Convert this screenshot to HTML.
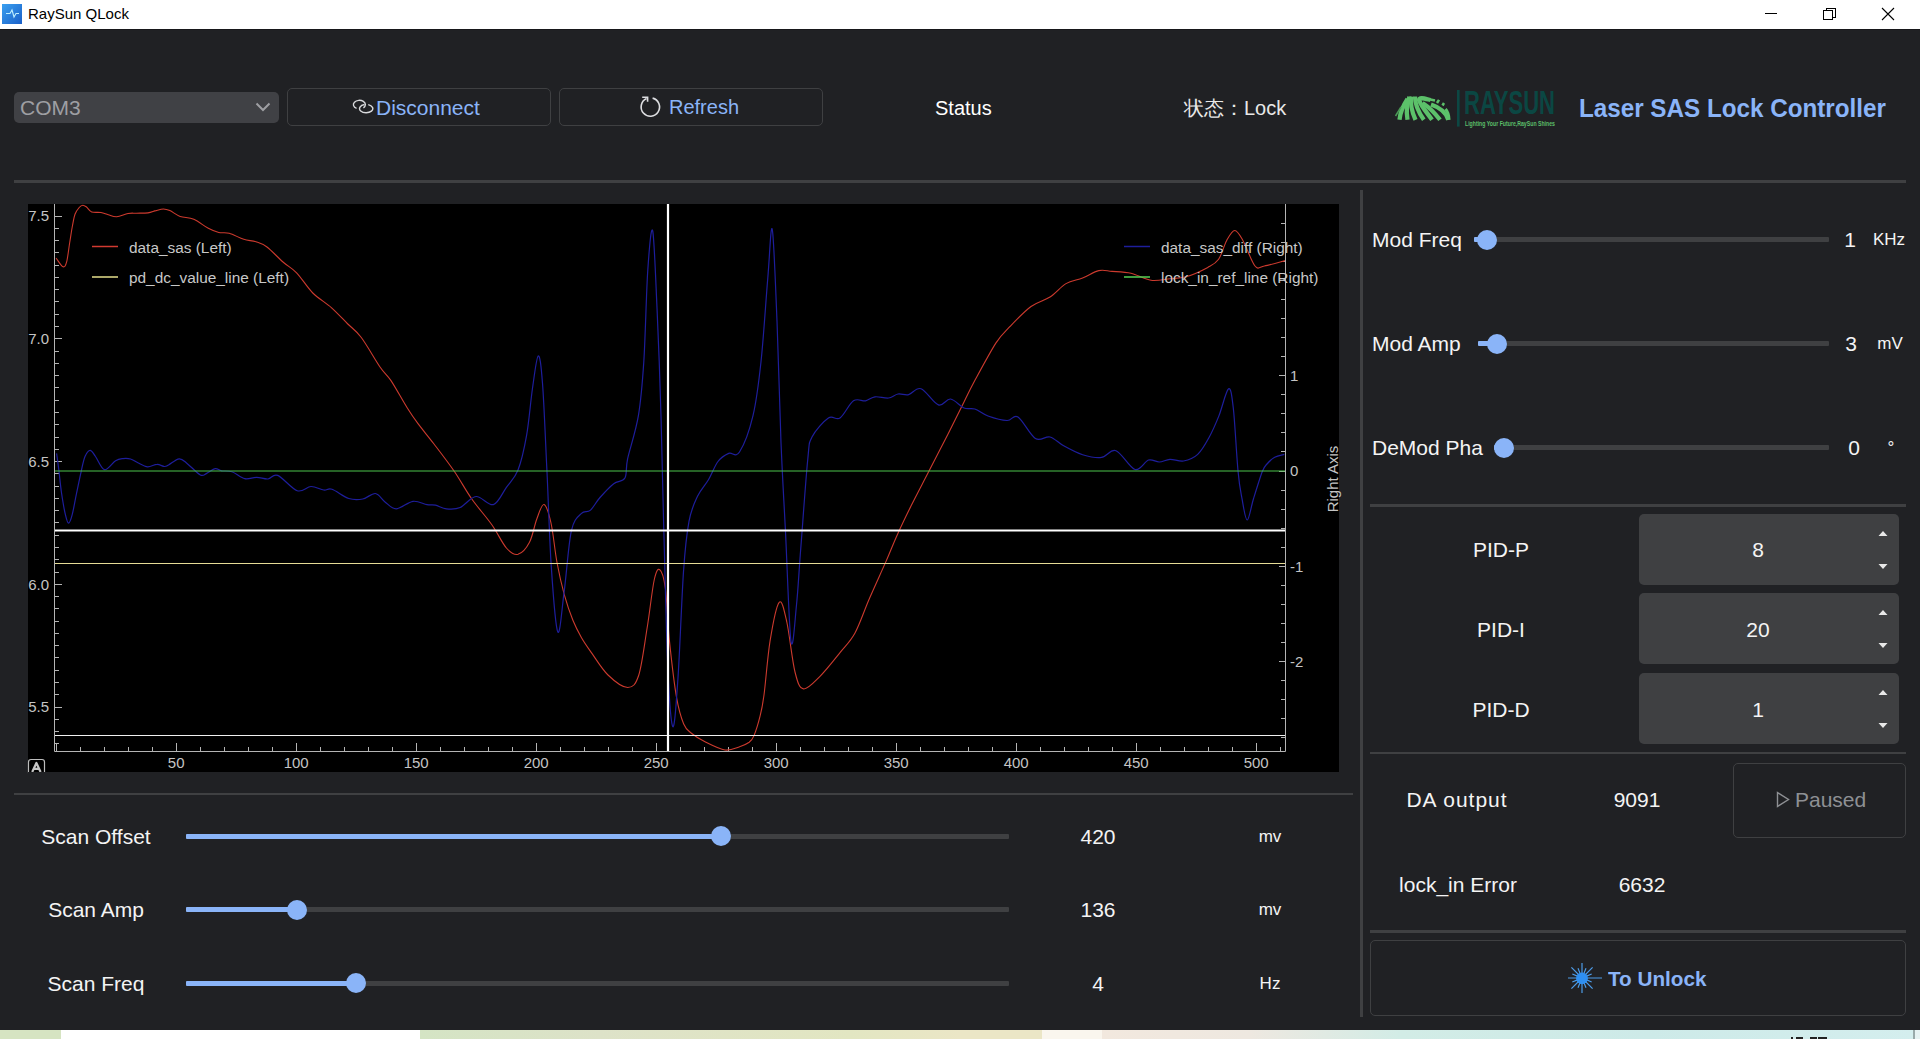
<!DOCTYPE html>
<html><head><meta charset="utf-8">
<style>
*{margin:0;padding:0;box-sizing:border-box}
html,body{width:1920px;height:1039px;overflow:hidden;background:#202124;font-family:"Liberation Sans",sans-serif;color:#e4e7eb}
.a{position:absolute}
.t{position:absolute;white-space:nowrap;line-height:1}
.c{transform:translateX(-50%)}
.btn{position:absolute;border:1px solid #3f4042;border-radius:5px}
.hl{position:absolute;background:#3f4042}
.groove{position:absolute;height:5px;background:#3f4042;border-radius:1px}
.fill{position:absolute;height:5px;background:#8ab4f8;border-radius:1px}
.knob{position:absolute;width:20px;height:20px;border-radius:50%;background:#8ab4f8}
.spin{position:absolute;background:#3f4042;border-radius:5px}
.ax{font-family:"Liberation Sans",sans-serif;font-size:15px;fill:#c4c4c4}
.lg{font-family:"Liberation Sans",sans-serif;font-size:15.4px;fill:#c8c8c8}
.lbl{font-size:21px;color:#f4f4f4}
</style></head><body>
<div class="a" style="left:0;top:0;width:1920px;height:29px;background:#fff">
  <svg class="a" style="left:2px;top:4px" width="20" height="20" viewBox="0 0 20 20">
    <defs><linearGradient id="ig" x1="0" y1="0" x2="1" y2="1"><stop offset="0" stop-color="#3aa0f0"/><stop offset="1" stop-color="#1a5fc8"/></linearGradient></defs>
    <rect x="0" y="0" width="20" height="20" fill="url(#ig)"/>
    <polyline points="4,9.5 8,9.5 10,6 12,13 14,9.5 17,9.5" fill="none" stroke="#bfefff" stroke-width="1.1"/>
  </svg>
  <div class="t" style="left:28px;top:6px;font-size:15px;color:#000">RaySun QLock</div>
  <div class="a" style="left:1765px;top:13px;width:12px;height:1px;background:#000"></div>
  <div class="a" style="left:1826px;top:8px;width:9.5px;height:10px;border:1px solid #000"></div>
  <div class="a" style="left:1823px;top:10px;width:10px;height:10px;border:1px solid #000;background:#fff"></div>
  <svg class="a" style="left:1881px;top:7px" width="14" height="14" viewBox="0 0 14 14"><path d="M1,1 L13,13 M13,1 L1,13" stroke="#000" stroke-width="1.1"/></svg>
</div>

<div class="a" style="left:0;top:29px;width:1920px;height:1px;background:#17171a"></div>
<div class="a" style="left:14px;top:92px;width:265px;height:31px;background:#404145;border-radius:5px"></div>
<div class="t" style="left:20px;top:97px;font-size:21px;color:#9e9fa3">COM3</div>
<svg class="a" style="left:255px;top:102px" width="16" height="10" viewBox="0 0 16 10"><polyline points="1.5,1.5 8,8 14.5,1.5" fill="none" stroke="#9e9fa3" stroke-width="2"/></svg>

<div class="btn" style="left:287px;top:88px;width:264px;height:38px"></div>
<svg class="a" style="left:352px;top:99px" width="22" height="15" viewBox="0 0 22 15">
  <path d="M4.58,9.40 A6.0,4.3 0 1 1 11.41,8.80" fill="none" stroke="#d8d9dc" stroke-width="1.4"/>
  <path d="M16.24,5.61 A6.6,4.2 0 1 1 12.49,5.54" fill="none" stroke="#d8d9dc" stroke-width="1.4"/>
</svg>
<div class="t" style="left:376px;top:97px;font-size:21px;color:#8ab4f8">Disconnect</div>

<div class="btn" style="left:559px;top:88px;width:264px;height:38px"></div>
<svg class="a" style="left:638px;top:96px" width="24" height="22" viewBox="0 0 24 22">
  <path d="M14.6,2.1 A9.2,9.2 0 1 1 8.6,2.6" fill="none" stroke="#dcdde0" stroke-width="1.6"/>
  <path d="M4.2,1.3 L9.6,1.3 L9.6,5.8" fill="none" stroke="#dcdde0" stroke-width="1.6"/>
</svg>
<div class="t" style="left:669px;top:97px;font-size:20px;color:#8ab4f8">Refresh</div>

<div class="t" style="left:935px;top:98px;font-size:20px;color:#fff">Status</div>
<div class="t" style="left:1184px;top:98px;font-size:20px;color:#e8e8e8">状态：Lock</div>

<div class="t" style="left:1579px;top:95.5px;font-size:25.5px;font-weight:bold;color:#8ab4f8;transform:scaleX(0.95);transform-origin:0 0">Laser SAS Lock Controller</div>

<div class="hl" style="left:14px;top:180px;width:1892px;height:3px"></div>
<svg class="a" style="left:1390px;top:90px" width="170" height="40" viewBox="0 0 170 40">
 <g fill="none" stroke="#5cc16a" stroke-width="4.3" stroke-linecap="butt">
  <path d="M9.5,29.8 C10,24 11.5,18 17.5,9"/>
  <path d="M17.5,29.8 C16.5,23 15.5,15 19.5,7"/>
  <path d="M25.5,29.8 C22.5,23 19.8,14 21.5,6.5"/>
  <path d="M33.8,29.8 C29,23 25,15 25,6.5"/>
  <path d="M42,29.8 C36.5,22 31,16 29,10 C29.5,7 34,8.5 40.5,10"/>
  <path d="M50,29.8 C44,22 38,16.5 32.5,13"/>
  <path d="M58.3,29.8 C56,22 50,17.5 41,14.5"/>
  <path d="M59,29.8 C59,25 58,22 55.5,19" stroke-width="3"/>
  <path d="M38,9 L45,10.5 M47,13 L49,9.8 M52.5,15.5 L54,13" stroke-width="2.5"/>
 </g>
 <path d="M5.5,26 L11,17" stroke="#4a9a56" stroke-width="1.5"/>
 <rect x="67" y="-1" width="2.6" height="37.6" fill="#0c4844"/>
 <text x="74" y="24" style="font:bold 34px 'Liberation Sans',sans-serif" fill="#0b4743" textLength="91" lengthAdjust="spacingAndGlyphs">RAYSUN</text>
 <text x="75" y="36" style="font:bold 7.5px 'Liberation Sans',sans-serif" fill="#5cbf6a" textLength="90" lengthAdjust="spacingAndGlyphs">Lighting Your Future,RaySun Shines</text>
</svg>
<svg class="a" style="left:0;top:0" width="1920" height="1039" viewBox="0 0 1920 1039">
<rect x="28" y="204" width="1311" height="568" fill="#000"/>
<path d="M54.5,204 V751.5 H1285.5 V204" fill="none" stroke="#b4b4b4" stroke-width="1"/>
<path d="M55,743.8h4 M55,731.6h4 M55,719.3h4 M55,707.0h7 M55,694.7h4 M55,682.5h4 M55,670.2h4 M55,657.9h4 M55,645.6h4 M55,633.4h4 M55,621.1h4 M55,608.8h4 M55,596.5h4 M55,584.2h7 M55,572.0h4 M55,559.7h4 M55,547.4h4 M55,535.2h4 M55,522.9h4 M55,510.6h4 M55,498.3h4 M55,486.1h4 M55,473.8h4 M55,461.5h7 M55,449.2h4 M55,437.0h4 M55,424.7h4 M55,412.4h4 M55,400.1h4 M55,387.9h4 M55,375.6h4 M55,363.3h4 M55,351.0h4 M55,338.8h7 M55,326.5h4 M55,314.2h4 M55,301.9h4 M55,289.7h4 M55,277.4h4 M55,265.1h4 M55,252.8h4 M55,240.5h4 M55,228.3h4 M55,216.0h7 M56.2,751v-8 M80.2,751v-4 M104.2,751v-4 M128.2,751v-4 M152.2,751v-4 M176.2,751v-8 M200.2,751v-4 M224.2,751v-4 M248.2,751v-4 M272.2,751v-4 M296.2,751v-8 M320.2,751v-4 M344.2,751v-4 M368.2,751v-4 M392.2,751v-4 M416.2,751v-8 M440.2,751v-4 M464.2,751v-4 M488.2,751v-4 M512.2,751v-4 M536.2,751v-8 M560.2,751v-4 M584.2,751v-4 M608.2,751v-4 M632.2,751v-4 M656.2,751v-8 M680.2,751v-4 M704.2,751v-4 M728.2,751v-4 M752.2,751v-4 M776.2,751v-8 M800.2,751v-4 M824.2,751v-4 M848.2,751v-4 M872.2,751v-4 M896.2,751v-8 M920.2,751v-4 M944.2,751v-4 M968.2,751v-4 M992.2,751v-4 M1016.2,751v-8 M1040.2,751v-4 M1064.2,751v-4 M1088.2,751v-4 M1112.2,751v-4 M1136.2,751v-8 M1160.2,751v-4 M1184.2,751v-4 M1208.2,751v-4 M1232.2,751v-4 M1256.2,751v-8 M1280.2,751v-4 M1285,737.8h-4 M1285,718.8h-4 M1285,699.7h-4 M1285,680.7h-4 M1285,661.6h-6 M1285,642.5h-4 M1285,623.5h-4 M1285,604.4h-4 M1285,585.4h-4 M1285,566.3h-6 M1285,547.2h-4 M1285,528.2h-4 M1285,509.1h-4 M1285,490.1h-4 M1285,471.0h-6 M1285,451.9h-4 M1285,432.9h-4 M1285,413.8h-4 M1285,394.8h-4 M1285,375.7h-6 M1285,356.6h-4 M1285,337.6h-4 M1285,318.5h-4 M1285,299.5h-4 M1285,280.4h-6 M1285,261.3h-4 M1285,242.3h-4 M1285,223.2h-4" fill="none" stroke="#b4b4b4" stroke-width="1" shape-rendering="crispEdges"/>
<text x="49" y="221.3" text-anchor="end" class="ax">7.5</text>
<text x="49" y="344.1" text-anchor="end" class="ax">7.0</text>
<text x="49" y="466.8" text-anchor="end" class="ax">6.5</text>
<text x="49" y="589.5" text-anchor="end" class="ax">6.0</text>
<text x="49" y="712.3" text-anchor="end" class="ax">5.5</text>
<text x="176.2" y="767.5" text-anchor="middle" class="ax">50</text>
<text x="296.2" y="767.5" text-anchor="middle" class="ax">100</text>
<text x="416.2" y="767.5" text-anchor="middle" class="ax">150</text>
<text x="536.2" y="767.5" text-anchor="middle" class="ax">200</text>
<text x="656.2" y="767.5" text-anchor="middle" class="ax">250</text>
<text x="776.2" y="767.5" text-anchor="middle" class="ax">300</text>
<text x="896.2" y="767.5" text-anchor="middle" class="ax">350</text>
<text x="1016.2" y="767.5" text-anchor="middle" class="ax">400</text>
<text x="1136.2" y="767.5" text-anchor="middle" class="ax">450</text>
<text x="1256.2" y="767.5" text-anchor="middle" class="ax">500</text>
<text x="1290" y="381.0" class="ax">1</text>
<text x="1290" y="476.3" class="ax">0</text>
<text x="1290" y="571.6" class="ax">-1</text>
<text x="1290" y="666.9" class="ax">-2</text>
<text x="1338" y="479" transform="rotate(-90 1338 479)" text-anchor="middle" class="ax">Right Axis</text>
<path d="M56.0,258.0 C57.2,259.4 61.2,266.1 63.0,266.7 C64.8,267.3 65.6,265.8 66.7,261.7 C67.8,257.6 68.8,247.9 69.8,242.0 C70.8,236.1 71.5,230.6 72.4,226.0 C73.3,221.4 73.9,217.4 75.0,214.3 C76.1,211.2 77.9,209.0 79.2,207.5 C80.5,206.0 81.6,205.3 82.8,205.2 C84.0,205.1 85.0,205.9 86.5,207.0 C88.0,208.1 89.3,211.0 91.7,211.9 C94.1,212.8 98.2,212.0 101.0,212.5 C103.8,213.0 105.7,214.1 108.3,214.8 C110.9,215.5 113.4,216.9 116.7,216.7 C120.0,216.5 124.7,214.1 128.0,213.5 C131.3,212.9 133.2,213.3 136.5,213.2 C139.8,213.1 144.8,213.3 148.0,212.9 C151.2,212.5 153.4,211.2 156.0,210.6 C158.6,209.9 161.2,209.0 163.5,209.0 C165.8,209.0 167.0,209.4 169.8,210.6 C172.6,211.8 176.2,215.0 180.2,216.4 C184.2,217.8 189.1,217.2 193.8,219.2 C198.4,221.2 204.1,226.1 208.3,228.3 C212.5,230.5 215.3,231.7 218.8,232.5 C222.2,233.3 225.0,232.2 229.2,233.3 C233.4,234.4 239.3,237.9 243.8,239.3 C248.2,240.7 252.1,240.5 256.0,241.8 C259.9,243.1 262.5,243.6 267.0,247.0 C271.5,250.4 278.1,257.7 283.0,262.0 C287.9,266.3 291.6,267.6 296.6,272.8 C301.6,278.0 307.0,287.2 312.8,293.0 C318.6,298.8 325.8,302.6 331.6,307.8 C337.4,313.0 342.9,319.1 347.8,324.0 C352.8,328.9 355.9,330.3 361.3,337.5 C366.7,344.7 375.1,359.8 380.0,367.0 C384.9,374.2 386.5,373.9 391.0,380.6 C395.5,387.4 402.5,400.3 407.0,407.5 C411.5,414.7 413.5,417.6 418.0,423.7 C422.5,429.8 427.9,436.0 434.0,444.0 C440.1,452.0 448.1,462.3 454.4,471.5 C460.7,480.7 465.5,490.1 471.8,499.0 C478.1,507.9 486.2,516.8 492.0,525.0 C497.8,533.2 502.1,543.1 506.4,548.0 C510.7,552.9 514.1,555.2 518.0,554.3 C521.9,553.3 526.4,548.2 529.5,542.3 C532.6,536.4 534.4,525.3 536.8,519.0 C539.2,512.7 541.6,503.8 544.0,504.5 C546.4,505.2 548.8,513.3 551.0,523.0 C553.2,532.7 554.8,550.6 557.0,562.5 C559.2,574.4 561.6,584.7 564.2,594.3 C566.9,603.9 570.0,613.1 572.9,620.3 C575.8,627.5 578.4,632.3 581.5,637.7 C584.6,643.1 587.0,646.4 591.4,652.6 C595.8,658.8 602.0,669.2 608.0,675.0 C614.0,680.8 622.6,687.5 627.7,687.5 C632.8,687.5 635.5,685.0 638.8,675.0 C642.0,665.0 644.6,643.3 647.2,627.5 C649.8,611.7 652.1,589.6 654.2,580.0 C656.3,570.4 657.9,568.3 659.8,569.7 C661.7,571.1 663.8,576.5 665.4,588.4 C667.0,600.3 667.6,623.3 669.5,641.4 C671.4,659.5 674.1,683.4 676.5,697.2 C678.9,711.0 681.2,718.0 683.7,724.0 C686.2,730.0 687.7,730.2 691.4,733.2 C695.1,736.2 700.3,739.5 705.9,742.3 C711.5,745.1 719.4,749.3 725.0,750.0 C730.6,750.7 735.6,748.0 739.6,746.7 C743.6,745.4 746.8,744.1 749.2,742.3 C751.6,740.4 752.2,739.9 754.0,735.6 C755.8,731.3 758.3,723.2 760.0,716.4 C761.7,709.6 762.3,707.5 764.0,695.0 C765.7,682.5 767.5,656.9 770.0,641.4 C772.5,625.9 776.4,605.5 779.2,602.3 C782.0,599.1 784.2,610.4 786.8,622.0 C789.4,633.6 792.2,660.9 795.0,672.0 C797.8,683.1 799.3,688.2 803.5,688.9 C807.7,689.6 813.9,682.3 820.0,676.3 C826.1,670.2 834.2,659.8 840.0,652.6 C845.8,645.4 850.2,641.9 855.0,633.0 C859.8,624.1 863.9,611.4 869.0,599.5 C874.1,587.6 881.1,572.6 885.8,561.9 C890.5,551.2 892.8,544.7 897.0,535.4 C901.2,526.1 905.7,516.7 911.0,506.0 C916.3,495.3 922.9,482.9 929.0,471.0 C935.1,459.1 942.0,446.0 947.8,434.5 C953.6,423.0 959.5,411.0 964.0,402.0 C968.5,393.0 969.5,390.5 974.8,380.6 C980.1,370.8 990.2,351.9 996.0,342.9 C1001.8,333.9 1004.0,332.8 1009.8,326.7 C1015.6,320.6 1024.3,311.4 1031.0,306.5 C1037.7,301.6 1044.2,300.8 1050.0,297.0 C1055.8,293.2 1060.6,286.8 1066.0,283.6 C1071.4,280.4 1077.1,280.2 1082.6,278.0 C1088.1,275.8 1093.9,271.7 1098.8,270.6 C1103.7,269.5 1106.6,270.9 1112.0,271.4 C1117.4,271.8 1124.5,271.8 1131.0,273.3 C1137.5,274.8 1144.5,279.4 1151.0,280.3 C1157.5,281.2 1164.2,279.3 1170.0,278.7 C1175.8,278.1 1179.7,278.7 1186.0,276.8 C1192.3,274.9 1202.4,270.3 1207.8,267.4 C1213.2,264.5 1215.4,263.8 1218.6,259.3 C1221.8,254.8 1224.0,245.2 1226.7,240.4 C1229.4,235.6 1232.1,230.5 1234.8,230.5 C1237.5,230.5 1239.5,234.5 1242.9,240.4 C1246.3,246.3 1251.4,261.7 1255.0,266.0 C1258.6,270.3 1259.4,266.9 1264.4,266.0 C1269.4,265.1 1281.6,261.5 1285.0,260.6" fill="none" stroke="#cc3a2e" stroke-width="1.1"/>
<path d="M56.6,453.3 C57.0,456.3 58.2,464.6 59.0,471.3 C59.8,478.0 60.5,486.3 61.6,493.5 C62.7,500.7 64.2,509.8 65.4,514.7 C66.6,519.7 67.4,523.2 68.5,523.2 C69.6,523.2 70.9,519.7 72.2,514.7 C73.5,509.8 75.0,500.7 76.5,493.5 C78.0,486.3 79.8,477.5 81.2,471.3 C82.6,465.1 83.5,460.0 85.0,456.5 C86.5,453.0 88.5,450.3 90.2,450.3 C92.0,450.3 93.1,453.3 95.5,456.5 C97.9,459.7 101.2,469.0 104.5,469.7 C107.8,470.4 112.5,462.5 115.6,460.7 C118.7,458.9 120.5,458.9 123.0,458.6 C125.5,458.3 128.0,458.3 130.5,459.0 C133.0,459.7 135.1,461.5 137.9,462.8 C140.7,464.1 144.2,466.5 147.4,466.8 C150.6,467.1 154.2,464.4 157.0,464.4 C159.8,464.3 162.4,466.4 164.3,466.5 C166.2,466.6 166.1,466.3 168.6,465.0 C171.1,463.7 176.0,459.0 179.2,458.8 C182.4,458.6 184.1,461.2 187.6,463.9 C191.1,466.6 197.1,473.4 200.3,475.0 C203.5,476.6 204.2,474.5 206.7,473.4 C209.2,472.3 212.7,469.0 215.2,468.6 C217.7,468.2 218.7,470.3 221.5,470.8 C224.3,471.3 228.1,470.5 232.0,471.8 C235.9,473.1 240.7,477.8 244.8,478.7 C248.9,479.6 252.8,477.2 256.7,477.3 C260.6,477.4 264.5,479.3 268.0,479.0 C271.5,478.7 272.8,473.4 277.7,475.4 C282.6,477.3 291.6,488.8 297.2,490.7 C302.8,492.6 306.6,486.6 311.0,486.5 C315.4,486.4 320.2,489.5 323.7,490.0 C327.2,490.5 327.8,487.9 332.0,489.3 C336.2,490.7 343.7,496.9 348.8,498.5 C353.9,500.1 358.4,499.8 362.8,499.0 C367.2,498.2 371.7,493.0 375.4,493.5 C379.1,494.0 381.5,499.3 385.0,501.9 C388.5,504.4 391.6,508.9 396.3,508.8 C401.0,508.7 407.9,502.0 413.0,501.3 C418.1,500.6 423.3,504.1 427.0,504.7 C430.7,505.3 432.1,504.5 435.4,505.2 C438.6,505.9 442.4,508.4 446.5,508.8 C450.6,509.2 455.3,509.6 460.2,507.5 C465.1,505.4 470.5,497.0 476.0,496.5 C481.5,496.0 488.3,506.1 493.4,504.6 C498.5,503.1 502.3,493.1 506.4,487.3 C510.5,481.5 514.6,478.7 518.0,470.0 C521.4,461.3 524.2,448.8 526.6,435.3 C529.0,421.8 530.5,402.2 532.4,389.0 C534.3,375.8 536.5,356.9 538.2,356.0 C539.9,355.1 541.0,364.3 542.5,383.3 C544.0,402.3 545.4,439.6 546.9,470.0 C548.4,500.4 549.4,538.4 551.2,565.4 C553.0,592.4 555.6,627.7 557.8,632.0 C560.0,636.3 561.9,608.2 564.2,591.3 C566.5,574.4 568.5,543.7 571.4,530.7 C574.3,517.7 578.4,516.7 581.5,513.3 C584.6,509.9 587.1,513.0 590.2,510.4 C593.3,507.8 596.1,501.9 600.0,497.5 C603.9,493.1 609.6,486.9 613.7,483.7 C617.9,480.4 622.6,482.1 624.9,478.0 C627.2,473.9 625.4,469.2 627.6,458.8 C629.9,448.4 635.7,431.8 638.4,415.6 C641.1,399.4 642.2,386.0 643.8,361.7 C645.4,337.4 646.3,291.8 647.8,270.0 C649.3,248.2 651.2,224.7 652.7,231.0 C654.2,237.3 655.6,277.0 657.0,307.8 C658.4,338.6 659.4,360.0 661.0,415.6 C662.6,471.2 664.9,589.7 666.8,641.4 C668.7,693.1 670.6,720.0 672.5,726.0 C674.4,732.0 676.2,703.4 678.0,677.7 C679.8,652.0 681.7,597.7 683.5,571.6 C685.3,545.5 686.7,533.9 689.0,521.4 C691.3,508.8 694.2,503.3 697.5,496.3 C700.8,489.3 705.2,485.3 708.6,479.5 C712.0,473.7 714.6,465.9 718.0,461.5 C721.4,457.1 725.1,455.0 728.7,453.4 C732.3,451.8 735.5,458.3 739.5,452.0 C743.5,445.7 749.4,430.7 753.0,415.6 C756.6,400.6 758.5,384.6 761.0,361.7 C763.5,338.8 765.9,300.0 767.8,278.0 C769.7,256.0 770.8,222.4 772.3,229.6 C773.8,236.8 775.5,285.5 777.0,321.0 C778.5,356.5 779.6,407.8 781.0,442.6 C782.4,477.4 783.7,496.7 785.4,529.8 C787.1,562.9 789.1,628.9 791.0,641.4 C792.9,653.9 794.9,620.4 796.5,605.0 C798.1,589.6 798.8,573.5 800.7,549.3 C802.6,525.1 805.8,478.7 807.7,460.0 C809.6,441.3 808.5,444.0 812.0,437.0 C815.5,430.0 823.7,421.2 828.4,418.0 C833.1,414.8 835.8,420.9 840.0,418.0 C844.2,415.1 849.2,403.7 853.5,400.8 C857.8,397.9 862.0,401.5 865.6,400.8 C869.2,400.1 871.2,397.3 875.0,396.8 C878.8,396.3 884.7,398.5 888.5,398.0 C892.3,397.5 894.6,394.6 898.0,394.0 C901.4,393.4 904.9,395.5 908.7,394.6 C912.5,393.7 916.0,387.0 921.0,388.7 C926.0,390.4 933.5,403.2 938.4,404.9 C943.3,406.6 946.2,398.5 950.5,399.0 C954.8,399.5 960.0,406.3 964.0,408.0 C968.0,409.7 970.8,407.7 974.8,409.0 C978.8,410.3 982.6,414.1 988.0,416.0 C993.4,417.9 1002.0,420.3 1007.0,420.5 C1012.0,420.7 1013.3,414.0 1018.0,417.0 C1022.7,420.0 1030.1,435.2 1035.4,438.5 C1040.7,441.8 1045.3,435.8 1050.0,437.0 C1054.7,438.2 1058.3,442.9 1063.7,445.8 C1069.1,448.8 1076.3,452.8 1082.6,454.7 C1088.9,456.6 1095.9,458.1 1101.5,457.4 C1107.1,456.7 1110.4,448.7 1116.0,450.7 C1121.6,452.7 1129.6,467.9 1135.0,469.5 C1140.4,471.1 1144.5,461.2 1148.5,460.0 C1152.5,458.8 1155.7,462.1 1159.3,462.0 C1162.9,461.9 1166.0,459.5 1170.0,459.3 C1174.0,459.1 1179.0,461.8 1183.6,461.0 C1188.2,460.2 1193.4,458.4 1197.7,454.4 C1202.0,450.4 1205.8,443.4 1209.3,437.0 C1212.8,430.6 1215.7,423.9 1218.9,415.9 C1222.1,407.9 1226.1,390.2 1228.5,388.9 C1230.9,387.6 1231.7,394.2 1233.3,408.0 C1234.9,421.8 1236.6,456.6 1238.1,471.7 C1239.5,486.8 1240.5,490.6 1242.0,498.7 C1243.5,506.8 1245.3,520.0 1247.2,520.0 C1249.1,520.0 1251.0,506.8 1253.5,498.7 C1256.0,490.6 1260.0,477.5 1262.2,471.7 C1264.5,465.9 1264.9,466.4 1267.0,464.0 C1269.1,461.6 1271.8,458.9 1274.7,457.3 C1277.6,455.7 1282.7,454.9 1284.3,454.4" fill="none" stroke="#1e1e9c" stroke-width="1.2"/>
<path d="M55,471h1230" stroke="#4cc44c" stroke-width="1.2"/>
<path d="M55,530.5h1230" stroke="#fff" stroke-width="2.2"/>
<path d="M55,563.5h1230" stroke="#e6dc96" stroke-width="1.1"/>
<path d="M55,735.5h1230" stroke="#f0f0f0" stroke-width="1.2"/>
<path d="M668,204V751" stroke="#fff" stroke-width="2.2"/>
<path d="M92,246.5h26" stroke="#d23a30" stroke-width="1.5"/>
<path d="M92,277h26" stroke="#e6e08c" stroke-width="1.5"/>
<text x="129" y="252.5" class="lg">data_sas (Left)</text>
<text x="129" y="283" class="lg">pd_dc_value_line (Left)</text>
<path d="M1124,246.5h26" stroke="#1e1e9c" stroke-width="1.5"/>
<path d="M1124,277h26" stroke="#55d055" stroke-width="1.5"/>
<text x="1161" y="252.5" class="lg">data_sas_diff (Right)</text>
<text x="1161" y="283" class="lg">lock_in_ref_line (Right)</text>
<rect x="28.5" y="759.5" width="16" height="16" rx="2.5" fill="none" stroke="#bdbdbd" stroke-width="1.2"/>
<path d="M32.2,772 L36.4,763 L40.6,772 M34,768.8 H38.8" fill="none" stroke="#c4c4c4" stroke-width="2.2" stroke-linejoin="round"/>
<rect x="28" y="772" width="20" height="6" fill="#202124"/>
</svg>
<div class="hl" style="left:1360px;top:190px;width:3px;height:827px"></div>
<div class="hl" style="left:14px;top:793px;width:1339px;height:2px"></div>
<div class="t" style="left:96px;top:825.9px;font-size:21px;color:#f4f4f4;transform:translateX(-50%);">Scan Offset</div>
<div class="groove" style="left:186px;top:833.5px;width:823px"></div><div class="fill" style="left:186px;top:833.5px;width:535px"></div><div class="knob" style="left:711px;top:826px"></div>
<div class="t" style="left:1098px;top:825.9px;font-size:21px;color:#f4f4f4;transform:translateX(-50%);">420</div>
<div class="t" style="left:1270px;top:827.8px;font-size:17px;color:#f4f4f4;transform:translateX(-50%);">mv</div>
<div class="t" style="left:96px;top:899.4px;font-size:21px;color:#f4f4f4;transform:translateX(-50%);">Scan Amp</div>
<div class="groove" style="left:186px;top:907.0px;width:823px"></div><div class="fill" style="left:186px;top:907.0px;width:111px"></div><div class="knob" style="left:287px;top:899.5px"></div>
<div class="t" style="left:1098px;top:899.4px;font-size:21px;color:#f4f4f4;transform:translateX(-50%);">136</div>
<div class="t" style="left:1270px;top:901.3px;font-size:17px;color:#f4f4f4;transform:translateX(-50%);">mv</div>
<div class="t" style="left:96px;top:972.9px;font-size:21px;color:#f4f4f4;transform:translateX(-50%);">Scan Freq</div>
<div class="groove" style="left:186px;top:980.5px;width:823px"></div><div class="fill" style="left:186px;top:980.5px;width:170px"></div><div class="knob" style="left:346px;top:973px"></div>
<div class="t" style="left:1098px;top:972.9px;font-size:21px;color:#f4f4f4;transform:translateX(-50%);">4</div>
<div class="t" style="left:1270px;top:974.8px;font-size:17px;color:#f4f4f4;transform:translateX(-50%);">Hz</div>
<div class="t" style="left:1372px;top:229.4px;font-size:21px;color:#f4f4f4;">Mod Freq</div>
<div class="groove" style="left:1474px;top:237.0px;width:355px"></div><div class="fill" style="left:1474px;top:237.0px;width:13px"></div><div class="knob" style="left:1477px;top:229.5px"></div>
<div class="t" style="left:1850px;top:229.4px;font-size:21px;color:#f4f4f4;transform:translateX(-50%);">1</div>
<div class="t" style="left:1372px;top:333.4px;font-size:21px;color:#f4f4f4;">Mod Amp</div>
<div class="groove" style="left:1478px;top:341.0px;width:351px"></div><div class="fill" style="left:1478px;top:341.0px;width:19px"></div><div class="knob" style="left:1487px;top:333.5px"></div>
<div class="t" style="left:1851px;top:333.4px;font-size:21px;color:#f4f4f4;transform:translateX(-50%);">3</div>
<div class="t" style="left:1372px;top:437.4px;font-size:21px;color:#f4f4f4;">DeMod Pha</div>
<div class="groove" style="left:1494px;top:445.0px;width:335px"></div><div class="fill" style="left:1494px;top:445.0px;width:10px"></div><div class="knob" style="left:1494px;top:437.5px"></div>
<div class="t" style="left:1854px;top:437.4px;font-size:21px;color:#f4f4f4;transform:translateX(-50%);">0</div>
<div class="t" style="left:1889px;top:230.8px;font-size:17px;color:#f4f4f4;transform:translateX(-50%);">KHz</div>
<div class="t" style="left:1890px;top:334.8px;font-size:17px;color:#f4f4f4;transform:translateX(-50%);">mV</div>
<div class="t" style="left:1891px;top:438.8px;font-size:17px;color:#f4f4f4;transform:translateX(-50%);">°</div>
<div class="hl" style="left:1370px;top:504px;width:536px;height:3px"></div>
<div class="t" style="left:1501px;top:539.4px;font-size:21px;color:#f4f4f4;transform:translateX(-50%);">PID-P</div>
<div class="spin" style="left:1639px;top:514px;width:260px;height:71px"></div>
<div class="t" style="left:1758px;top:539.4px;font-size:21px;color:#f4f4f4;transform:translateX(-50%);">8</div>
<svg class="a" style="left:1877px;top:530px" width="12" height="44" viewBox="0 0 12 44"><path d="M1.5,6 L6,1 L10.5,6Z M1.5,34 L6,39 L10.5,34Z" fill="#e8e8e8"/></svg>
<div class="t" style="left:1501px;top:619.4px;font-size:21px;color:#f4f4f4;transform:translateX(-50%);">PID-I</div>
<div class="spin" style="left:1639px;top:593px;width:260px;height:71px"></div>
<div class="t" style="left:1758px;top:619.4px;font-size:21px;color:#f4f4f4;transform:translateX(-50%);">20</div>
<svg class="a" style="left:1877px;top:609px" width="12" height="44" viewBox="0 0 12 44"><path d="M1.5,6 L6,1 L10.5,6Z M1.5,34 L6,39 L10.5,34Z" fill="#e8e8e8"/></svg>
<div class="t" style="left:1501px;top:698.9px;font-size:21px;color:#f4f4f4;transform:translateX(-50%);">PID-D</div>
<div class="spin" style="left:1639px;top:673px;width:260px;height:71px"></div>
<div class="t" style="left:1758px;top:698.9px;font-size:21px;color:#f4f4f4;transform:translateX(-50%);">1</div>
<svg class="a" style="left:1877px;top:689px" width="12" height="44" viewBox="0 0 12 44"><path d="M1.5,6 L6,1 L10.5,6Z M1.5,34 L6,39 L10.5,34Z" fill="#e8e8e8"/></svg>
<div class="hl" style="left:1370px;top:752px;width:536px;height:2px"></div>
<div class="t" style="left:1457px;top:789.1px;font-size:21px;color:#f4f4f4;transform:translateX(-50%);"><span style='letter-spacing:1px'>DA output</span></div>
<div class="t" style="left:1637px;top:789.1px;font-size:21px;color:#f4f4f4;transform:translateX(-50%);">9091</div>
<div class="btn" style="left:1733px;top:763px;width:173px;height:75px"></div>
<svg class="a" style="left:1776px;top:791px" width="14" height="17" viewBox="0 0 14 17"><path d="M1.5,1.5 L12.5,8.5 L1.5,15.5Z" fill="none" stroke="#8e9094" stroke-width="1.4"/></svg>
<div class="t" style="left:1795px;top:789.1px;font-size:21px;color:#8e9094;">Paused</div>
<div class="t" style="left:1458px;top:874.1px;font-size:21px;color:#f4f4f4;transform:translateX(-50%);">lock_in Error</div>
<div class="t" style="left:1642px;top:874.1px;font-size:21px;color:#f4f4f4;transform:translateX(-50%);">6632</div>
<div class="hl" style="left:1370px;top:930px;width:536px;height:3px"></div>
<div class="btn" style="left:1370px;top:940px;width:536px;height:76px"></div>
<svg class="a" style="left:0;top:0" width="1920" height="1039"><path d="M1587.0,978.0L1602.0,978.0 M1586.6,979.9L1591.7,982.0 M1585.5,981.5L1592.6,988.6 M1583.9,982.6L1586.0,987.7 M1582.0,983.0L1582.0,993.0 M1580.1,982.6L1578.0,987.7 M1578.5,981.5L1571.4,988.6 M1577.4,979.9L1572.3,982.0 M1577.0,978.0L1568.0,978.0 M1577.4,976.1L1572.3,974.0 M1578.5,974.5L1571.4,967.4 M1580.1,973.4L1578.0,968.3 M1582.0,973.0L1582.0,963.0 M1583.9,973.4L1586.0,968.3 M1585.5,974.5L1592.6,967.4 M1586.6,976.1L1591.7,974.0" stroke="#4d9be6" stroke-width="1.2"/><circle cx="1582" cy="978.3" r="5.9" fill="#2f8ff0"/></svg>
<div class="t" style="left:1608px;top:968.2px;font-size:21px;color:#8ab4f8;font-weight:bold;"><span style='display:inline-block;transform:scaleX(0.985);transform-origin:0 0'>To Unlock</span></div>
<div class="a" style="left:0;top:1030px;width:1920px;height:9px;background:linear-gradient(90deg,#d6e4c2 0,#d6e4c2 61px,#fff 61px,#fff 420px,#d4e4c4 420px,#dde2c8 600px,#e2e6c2 850px,#ebe6c6 960px,#ebe6c6 1042px,#faf6ee 1042px,#faf6ee 1102px,#f2e8de 1102px,#eee8e0 1250px,#d2ece6 1400px,#cdeae8 1650px,#d4eeee 1913px,#9aa 1913px,#9aa 1915px,#e6f2f2 1915px)"></div>
<div class="a" style="left:1790px;top:1037px;width:37px;height:2px;background:linear-gradient(90deg,transparent 0,transparent 1px,#222 1px,#222 3px,transparent 3px,transparent 6.5px,#222 6.5px,#222 13px,transparent 13px,transparent 20px,#222 20px,#222 27px,transparent 27px,transparent 28px,#222 28px,#222 37px)"></div>
</body></html>
